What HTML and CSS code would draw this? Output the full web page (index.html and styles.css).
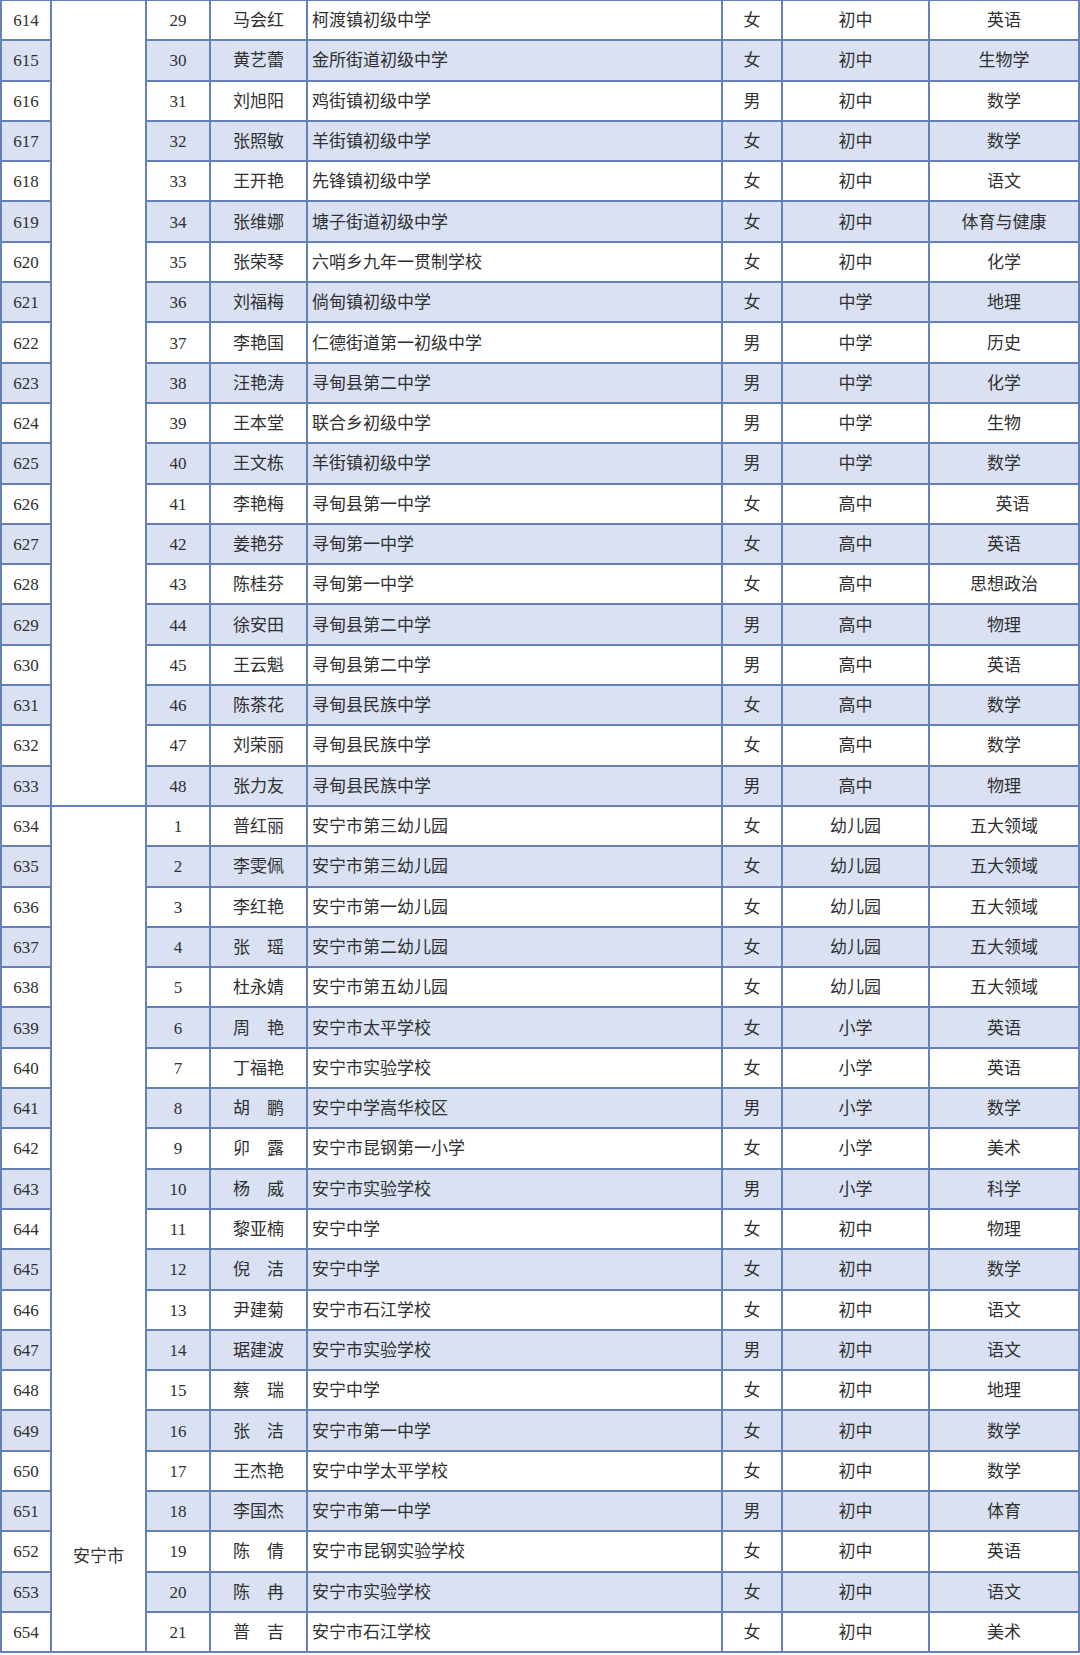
FILE: index.html
```html
<!DOCTYPE html>
<html lang="zh-CN">
<head>
<meta charset="utf-8">
<title>名单</title>
<link rel="stylesheet" href="styles.css">
</head>
<body>
<table class="roster">
<colgroup>
<col class="c-no"><col class="c-city"><col class="c-idx"><col class="c-name"><col class="c-school"><col class="c-sex"><col class="c-level"><col class="c-subj">
</colgroup>
<tbody>
<tr><td>614</td><td class="city" rowspan="20"></td><td>29</td><td>马会红</td><td class="school">柯渡镇初级中学</td><td>女</td><td>初中</td><td>英语</td></tr>
<tr class="alt"><td>615</td><td>30</td><td>黄艺蕾</td><td class="school">金所街道初级中学</td><td>女</td><td>初中</td><td>生物学</td></tr>
<tr><td>616</td><td>31</td><td>刘旭阳</td><td class="school">鸡街镇初级中学</td><td>男</td><td>初中</td><td>数学</td></tr>
<tr class="alt"><td>617</td><td>32</td><td>张照敏</td><td class="school">羊街镇初级中学</td><td>女</td><td>初中</td><td>数学</td></tr>
<tr><td>618</td><td>33</td><td>王开艳</td><td class="school">先锋镇初级中学</td><td>女</td><td>初中</td><td>语文</td></tr>
<tr class="alt"><td>619</td><td>34</td><td>张维娜</td><td class="school">塘子街道初级中学</td><td>女</td><td>初中</td><td>体育与健康</td></tr>
<tr><td>620</td><td>35</td><td>张荣琴</td><td class="school">六哨乡九年一贯制学校</td><td>女</td><td>初中</td><td>化学</td></tr>
<tr class="alt"><td>621</td><td>36</td><td>刘福梅</td><td class="school">倘甸镇初级中学</td><td>女</td><td>中学</td><td>地理</td></tr>
<tr><td>622</td><td>37</td><td>李艳国</td><td class="school">仁德街道第一初级中学</td><td>男</td><td>中学</td><td>历史</td></tr>
<tr class="alt"><td>623</td><td>38</td><td>汪艳涛</td><td class="school">寻甸县第二中学</td><td>男</td><td>中学</td><td>化学</td></tr>
<tr><td>624</td><td>39</td><td>王本堂</td><td class="school">联合乡初级中学</td><td>男</td><td>中学</td><td>生物</td></tr>
<tr class="alt"><td>625</td><td>40</td><td>王文栋</td><td class="school">羊街镇初级中学</td><td>男</td><td>中学</td><td>数学</td></tr>
<tr><td>626</td><td>41</td><td>李艳梅</td><td class="school">寻甸县第一中学</td><td>女</td><td>高中</td><td>　英语</td></tr>
<tr class="alt"><td>627</td><td>42</td><td>姜艳芬</td><td class="school">寻甸第一中学</td><td>女</td><td>高中</td><td>英语</td></tr>
<tr><td>628</td><td>43</td><td>陈桂芬</td><td class="school">寻甸第一中学</td><td>女</td><td>高中</td><td>思想政治</td></tr>
<tr class="alt"><td>629</td><td>44</td><td>徐安田</td><td class="school">寻甸县第二中学</td><td>男</td><td>高中</td><td>物理</td></tr>
<tr><td>630</td><td>45</td><td>王云魁</td><td class="school">寻甸县第二中学</td><td>男</td><td>高中</td><td>英语</td></tr>
<tr class="alt"><td>631</td><td>46</td><td>陈茶花</td><td class="school">寻甸县民族中学</td><td>女</td><td>高中</td><td>数学</td></tr>
<tr><td>632</td><td>47</td><td>刘荣丽</td><td class="school">寻甸县民族中学</td><td>女</td><td>高中</td><td>数学</td></tr>
<tr class="alt"><td>633</td><td>48</td><td>张力友</td><td class="school">寻甸县民族中学</td><td>男</td><td>高中</td><td>物理</td></tr>
<tr><td>634</td><td class="city" rowspan="21">安宁市</td><td>1</td><td>普红丽</td><td class="school">安宁市第三幼儿园</td><td>女</td><td>幼儿园</td><td>五大领域</td></tr>
<tr class="alt"><td>635</td><td>2</td><td>李雯佩</td><td class="school">安宁市第三幼儿园</td><td>女</td><td>幼儿园</td><td>五大领域</td></tr>
<tr><td>636</td><td>3</td><td>李红艳</td><td class="school">安宁市第一幼儿园</td><td>女</td><td>幼儿园</td><td>五大领域</td></tr>
<tr class="alt"><td>637</td><td>4</td><td>张　瑶</td><td class="school">安宁市第二幼儿园</td><td>女</td><td>幼儿园</td><td>五大领域</td></tr>
<tr><td>638</td><td>5</td><td>杜永婧</td><td class="school">安宁市第五幼儿园</td><td>女</td><td>幼儿园</td><td>五大领域</td></tr>
<tr class="alt"><td>639</td><td>6</td><td>周　艳</td><td class="school">安宁市太平学校</td><td>女</td><td>小学</td><td>英语</td></tr>
<tr><td>640</td><td>7</td><td>丁福艳</td><td class="school">安宁市实验学校</td><td>女</td><td>小学</td><td>英语</td></tr>
<tr class="alt"><td>641</td><td>8</td><td>胡　鹏</td><td class="school">安宁中学嵩华校区</td><td>男</td><td>小学</td><td>数学</td></tr>
<tr><td>642</td><td>9</td><td>卯　露</td><td class="school">安宁市昆钢第一小学</td><td>女</td><td>小学</td><td>美术</td></tr>
<tr class="alt"><td>643</td><td>10</td><td>杨　威</td><td class="school">安宁市实验学校</td><td>男</td><td>小学</td><td>科学</td></tr>
<tr><td>644</td><td>11</td><td>黎亚楠</td><td class="school">安宁中学</td><td>女</td><td>初中</td><td>物理</td></tr>
<tr class="alt"><td>645</td><td>12</td><td>倪　洁</td><td class="school">安宁中学</td><td>女</td><td>初中</td><td>数学</td></tr>
<tr><td>646</td><td>13</td><td>尹建菊</td><td class="school">安宁市石江学校</td><td>女</td><td>初中</td><td>语文</td></tr>
<tr class="alt"><td>647</td><td>14</td><td>琚建波</td><td class="school">安宁市实验学校</td><td>男</td><td>初中</td><td>语文</td></tr>
<tr><td>648</td><td>15</td><td>蔡　瑞</td><td class="school">安宁中学</td><td>女</td><td>初中</td><td>地理</td></tr>
<tr class="alt"><td>649</td><td>16</td><td>张　洁</td><td class="school">安宁市第一中学</td><td>女</td><td>初中</td><td>数学</td></tr>
<tr><td>650</td><td>17</td><td>王杰艳</td><td class="school">安宁中学太平学校</td><td>女</td><td>初中</td><td>数学</td></tr>
<tr class="alt"><td>651</td><td>18</td><td>李国杰</td><td class="school">安宁市第一中学</td><td>男</td><td>初中</td><td>体育</td></tr>
<tr><td>652</td><td>19</td><td>陈　倩</td><td class="school">安宁市昆钢实验学校</td><td>女</td><td>初中</td><td>英语</td></tr>
<tr class="alt"><td>653</td><td>20</td><td>陈　冉</td><td class="school">安宁市实验学校</td><td>女</td><td>初中</td><td>语文</td></tr>
<tr><td>654</td><td>21</td><td>普　吉</td><td class="school">安宁市石江学校</td><td>女</td><td>初中</td><td>美术</td></tr>
</tbody>
</table>
</body>
</html>
```
FILE: styles.css
```css
html, body {
  margin: 0;
  padding: 0;
  background: #ffffff;
}

.roster {
  border-collapse: collapse;
  table-layout: fixed;
  width: 1078px;
  margin-top: -1px;
  font-family: "Liberation Serif", "Noto Sans CJK SC", serif;
  font-size: 17px;
  color: #303030;
}

.c-no { width: 50px; }
.c-city { width: 95px; }
.c-idx { width: 64px; }
.c-name { width: 97px; }
.c-school { width: 415px; }
.c-sex { width: 60px; }
.c-level { width: 147px; }
.c-subj { width: 150px; }

.roster tr {
  height: 40.3px;
}

.roster td {
  border: 2px solid #6580b8;
  padding: 0 4px;
  text-align: center;
  vertical-align: middle;
  white-space: nowrap;
  line-height: 20px;
  padding-top: 2px;
}

.roster tr.alt td {
  background: #d9e1f2;
}

.roster td.school {
  text-align: left;
}

.roster td.city,
.roster tr.alt td.city {
  background: #ffffff;
  vertical-align: bottom;
  padding-bottom: 84px;
}
```
